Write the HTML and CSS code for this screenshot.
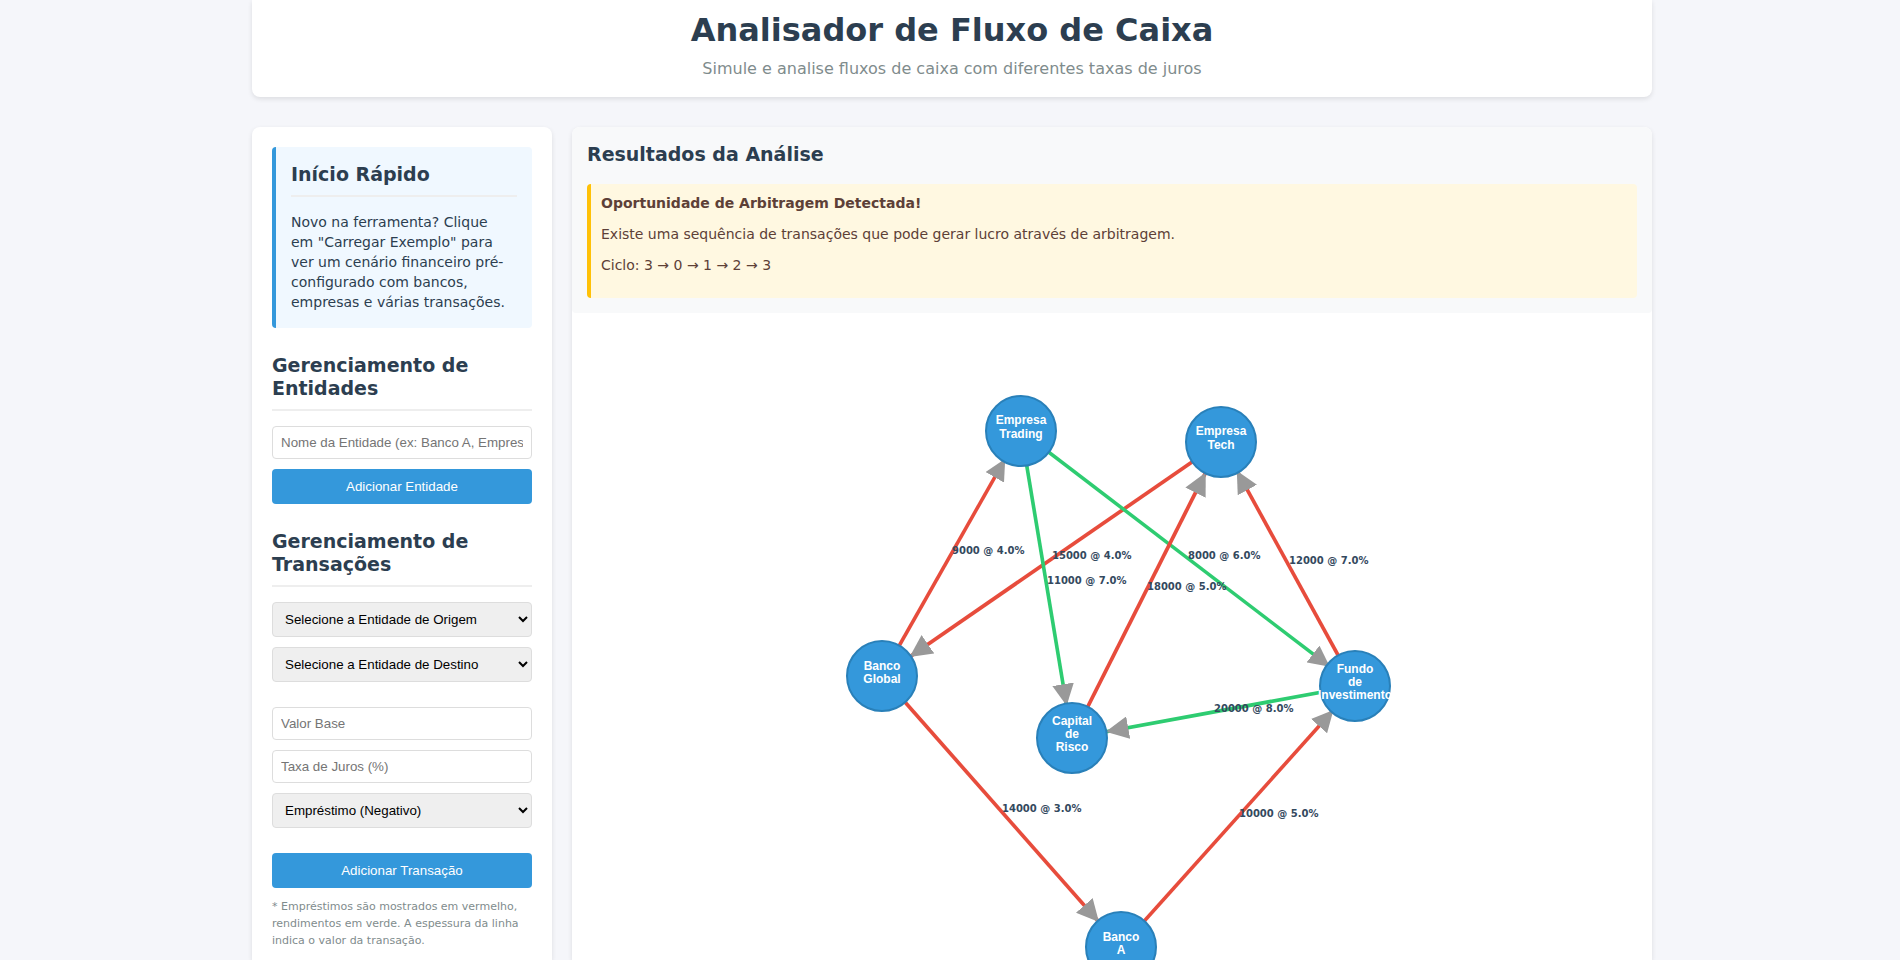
FILE: index.html
```html
<!DOCTYPE html>
<html lang="pt-BR">
<head>
<meta charset="utf-8">
<meta name="viewport" content="width=device-width, initial-scale=1">
<title>Analisador de Fluxo de Caixa</title>
<link rel="stylesheet" href="styles.css">
</head>
<body>
<div class="container">
  <header class="page-header">
    <h1 class="page-title">Analisador de Fluxo de Caixa</h1>
    <p class="page-subtitle">Simule e analise fluxos de caixa com diferentes taxas de juros</p>
  </header>

  <div class="layout">
    <aside class="sidebar">
      <section class="quick-start">
        <h2 class="section-title">Início Rápido</h2>
        <p class="quick-text">Novo na ferramenta? Clique em "Carregar Exemplo" para ver um cenário financeiro pré-configurado com bancos, empresas e várias transações.</p>
      </section>

      <section class="panel">
        <h2 class="section-title">Gerenciamento de Entidades</h2>
        <div class="fields">
          <input class="field" type="text" aria-label="Nome da Entidade" placeholder="Nome da Entidade (ex: Banco A, Empresa X)">
          <button class="button" type="button">Adicionar Entidade</button>
        </div>
      </section>

      <section class="panel">
        <h2 class="section-title">Gerenciamento de Transações</h2>
        <div class="groups">
          <div class="fields">
            <select class="field" aria-label="Entidade de Origem"><option>Selecione a Entidade de Origem</option></select>
            <select class="field" aria-label="Entidade de Destino"><option>Selecione a Entidade de Destino</option></select>
          </div>
          <div class="fields">
            <input class="field" type="text" aria-label="Valor Base" placeholder="Valor Base">
            <input class="field" type="text" aria-label="Taxa de Juros (%)" placeholder="Taxa de Juros (%)">
            <select class="field" aria-label="Tipo de transação"><option>Empréstimo (Negativo)</option><option>Rendimento (Positivo)</option></select>
          </div>
          <div class="fields">
            <button class="button" type="button">Adicionar Transação</button>
            <p class="note">* Empréstimos são mostrados em vermelho, rendimentos em verde. A espessura da linha indica o valor da transação.</p>
          </div>
        </div>
      </section>
    </aside>

    <main class="main">
      <section class="results">
        <h2 class="results-title">Resultados da Análise</h2>
        <div class="alert">
          <strong>Oportunidade de Arbitragem Detectada!</strong>
          <p class="alert-line">Existe uma sequência de transações que pode gerar lucro através de arbitragem.</p>
          <p class="alert-line">Ciclo: 3 → 0 → 1 → 2 → 3</p>
        </div>
      </section>

      <svg class="graph" viewBox="0 0 1080 647" preserveAspectRatio="xMidYMin meet" role="img" aria-label="Grafo de transações">
        <defs>
          <marker id="arrow" viewBox="0 -5 10 10" refX="25" refY="0" markerWidth="6" markerHeight="6" orient="auto">
            <path class="arrow-head" d="M0,-5L10,0L0,5"/>
          </marker>
        </defs>
        <g class="edges">
          <line class="loan" x1="549" y1="634" x2="783" y2="373" stroke-width="3.59"/>
          <line class="loan" x1="649" y1="129" x2="310" y2="363" stroke-width="3.72"/>
          <line class="yield" x1="449" y1="118" x2="783" y2="373" stroke-width="3.52"/>
          <line class="loan" x1="783" y1="373" x2="649" y2="129" stroke-width="3.65"/>
          <line class="loan" x1="310" y1="363" x2="449" y2="118" stroke-width="3.55"/>
          <line class="yield" x1="449" y1="118" x2="500" y2="425" stroke-width="3.63"/>
          <line class="loan" x1="310" y1="363" x2="549" y2="634" stroke-width="3.7"/>
          <line class="yield" x1="783" y1="373" x2="500" y2="425" stroke-width="3.81"/>
          <line class="loan" x1="500" y1="425" x2="649" y2="129" stroke-width="3.78"/>
        </g>
        <g class="nodes">
          <circle cx="549" cy="634" r="35"/>
          <circle cx="310" cy="363" r="35"/>
          <circle cx="649" cy="129" r="35"/>
          <circle cx="449" cy="118" r="35"/>
          <circle cx="783" cy="373" r="35"/>
          <circle cx="500" cy="425" r="35"/>
        </g>
        <g class="node-names">
          <text><tspan x="549" y="628">Banco</tspan><tspan x="549" y="641">A</tspan></text>
          <text><tspan x="310" y="357">Banco</tspan><tspan x="310" y="370">Global</tspan></text>
          <text><tspan x="649" y="122">Empresa</tspan><tspan x="649" y="136">Tech</tspan></text>
          <text><tspan x="449" y="111">Empresa</tspan><tspan x="449" y="125">Trading</tspan></text>
          <text><tspan x="783" y="360">Fundo</tspan><tspan x="783" y="373">de</tspan><tspan x="783" y="386">Investimento</tspan></text>
          <text><tspan x="500" y="412">Capital</tspan><tspan x="500" y="425">de</tspan><tspan x="500" y="438">Risco</tspan></text>
        </g>
        <g class="edge-labels">
          <text x="667" y="504">10000 @ 5.0%</text>
          <text x="480" y="246">15000 @ 4.0%</text>
          <text x="616" y="246">8000 @ 6.0%</text>
          <text x="717" y="251">12000 @ 7.0%</text>
          <text x="380" y="241">9000 @ 4.0%</text>
          <text x="475" y="271">11000 @ 7.0%</text>
          <text x="430" y="499">14000 @ 3.0%</text>
          <text x="642" y="399">20000 @ 8.0%</text>
          <text x="575" y="277">18000 @ 5.0%</text>
        </g>
      </svg>
    </main>
  </div>
</div>
</body>
</html>
```

FILE: styles.css
```css
* {
  box-sizing: border-box;
}

body {
  margin: 0;
  padding-left: 4px;
  background: #f5f6fa;
  color: #2c3e50;
  font-family: "Segoe UI", Tahoma, Geneva, Verdana, "DejaVu Sans", sans-serif;
  font-size: 14px;
  line-height: 20px;
}

h1, h2, p {
  margin: 0;
}

.container {
  display: flex;
  flex-direction: column;
  gap: 30px;
  max-width: 1400px;
  min-height: 100vh;
  margin: 0 auto;
}

.page-header {
  padding: 11px 20px 16px;
  background: #fff;
  border-radius: 0 0 8px 8px;
  box-shadow: 0 2px 5px rgba(0, 0, 0, 0.1);
  text-align: center;
}

.page-title {
  margin-bottom: 8px;
  font-size: 32px;
  line-height: 38px;
}

.page-subtitle {
  color: #7f8c8d;
  font-size: 16px;
  line-height: 24px;
}

.layout {
  display: flex;
  flex: 1;
  gap: 20px;
}

.sidebar,
.main {
  background: #fff;
  border-radius: 8px 8px 0 0;
  box-shadow: 0 2px 5px rgba(0, 0, 0, 0.1);
}

.sidebar {
  display: flex;
  flex: 0 0 300px;
  flex-direction: column;
  gap: 25px;
  padding: 20px 20px 0;
}

.main {
  flex: 1;
  min-width: 0;
}

.quick-start {
  padding: 15px 15px 16px;
  background: #f0f8ff;
  border-left: 4px solid #3498db;
  border-radius: 4px;
}

.quick-text {
  padding-right: 5px;
}

.section-title,
.results-title {
  padding-top: 1px;
  font-size: 19px;
  line-height: 23px;
}

.section-title {
  margin-bottom: 15px;
  padding-bottom: 9px;
  border-bottom: 2px solid #eee;
}

.results-title {
  margin-bottom: 18px;
}

.groups {
  display: flex;
  flex-direction: column;
  gap: 25px;
}

.fields {
  display: flex;
  flex-direction: column;
  gap: 10px;
}

.field {
  width: 100%;
  padding: 8px;
  border: 1px solid #ddd;
  border-radius: 4px;
  font-family: "Liberation Sans", Arial, sans-serif;
}

select.field {
  height: 35px;
  background-color: #efefef;
}

.button {
  padding: 10px 15px;
  background: #3498db;
  border: 0;
  border-radius: 4px;
  color: #fff;
  font-family: "Liberation Sans", Arial, sans-serif;
  cursor: pointer;
}

.note {
  color: #7f8c8d;
  font-size: 11px;
  line-height: 17px;
}

.results {
  padding: 15px;
  background: #f8f9fa;
  border-radius: 8px 8px 4px 4px;
}

.alert {
  display: flex;
  flex-direction: column;
  gap: 11px;
  padding: 9px 10px 23px;
  background: #fff8e1;
  border-left: 4px solid #ffc107;
  border-radius: 4px;
  color: #5d4037;
}

.graph {
  display: block;
  width: 100%;
}

.edges line {
  marker-end: url(#arrow);
}

.arrow-head {
  fill: #999;
}

.loan {
  stroke: #e74c3c;
}

.yield {
  stroke: #2ecc71;
}

.nodes circle {
  fill: #3498db;
  stroke: #2980b9;
  stroke-width: 2px;
}

.node-names {
  fill: #fff;
  font-family: "Liberation Sans", Arial, sans-serif;
  font-size: 12px;
  font-weight: bold;
  text-anchor: middle;
}

.edge-labels {
  fill: #34495e;
  font-size: 10px;
  font-weight: bold;
}
```
